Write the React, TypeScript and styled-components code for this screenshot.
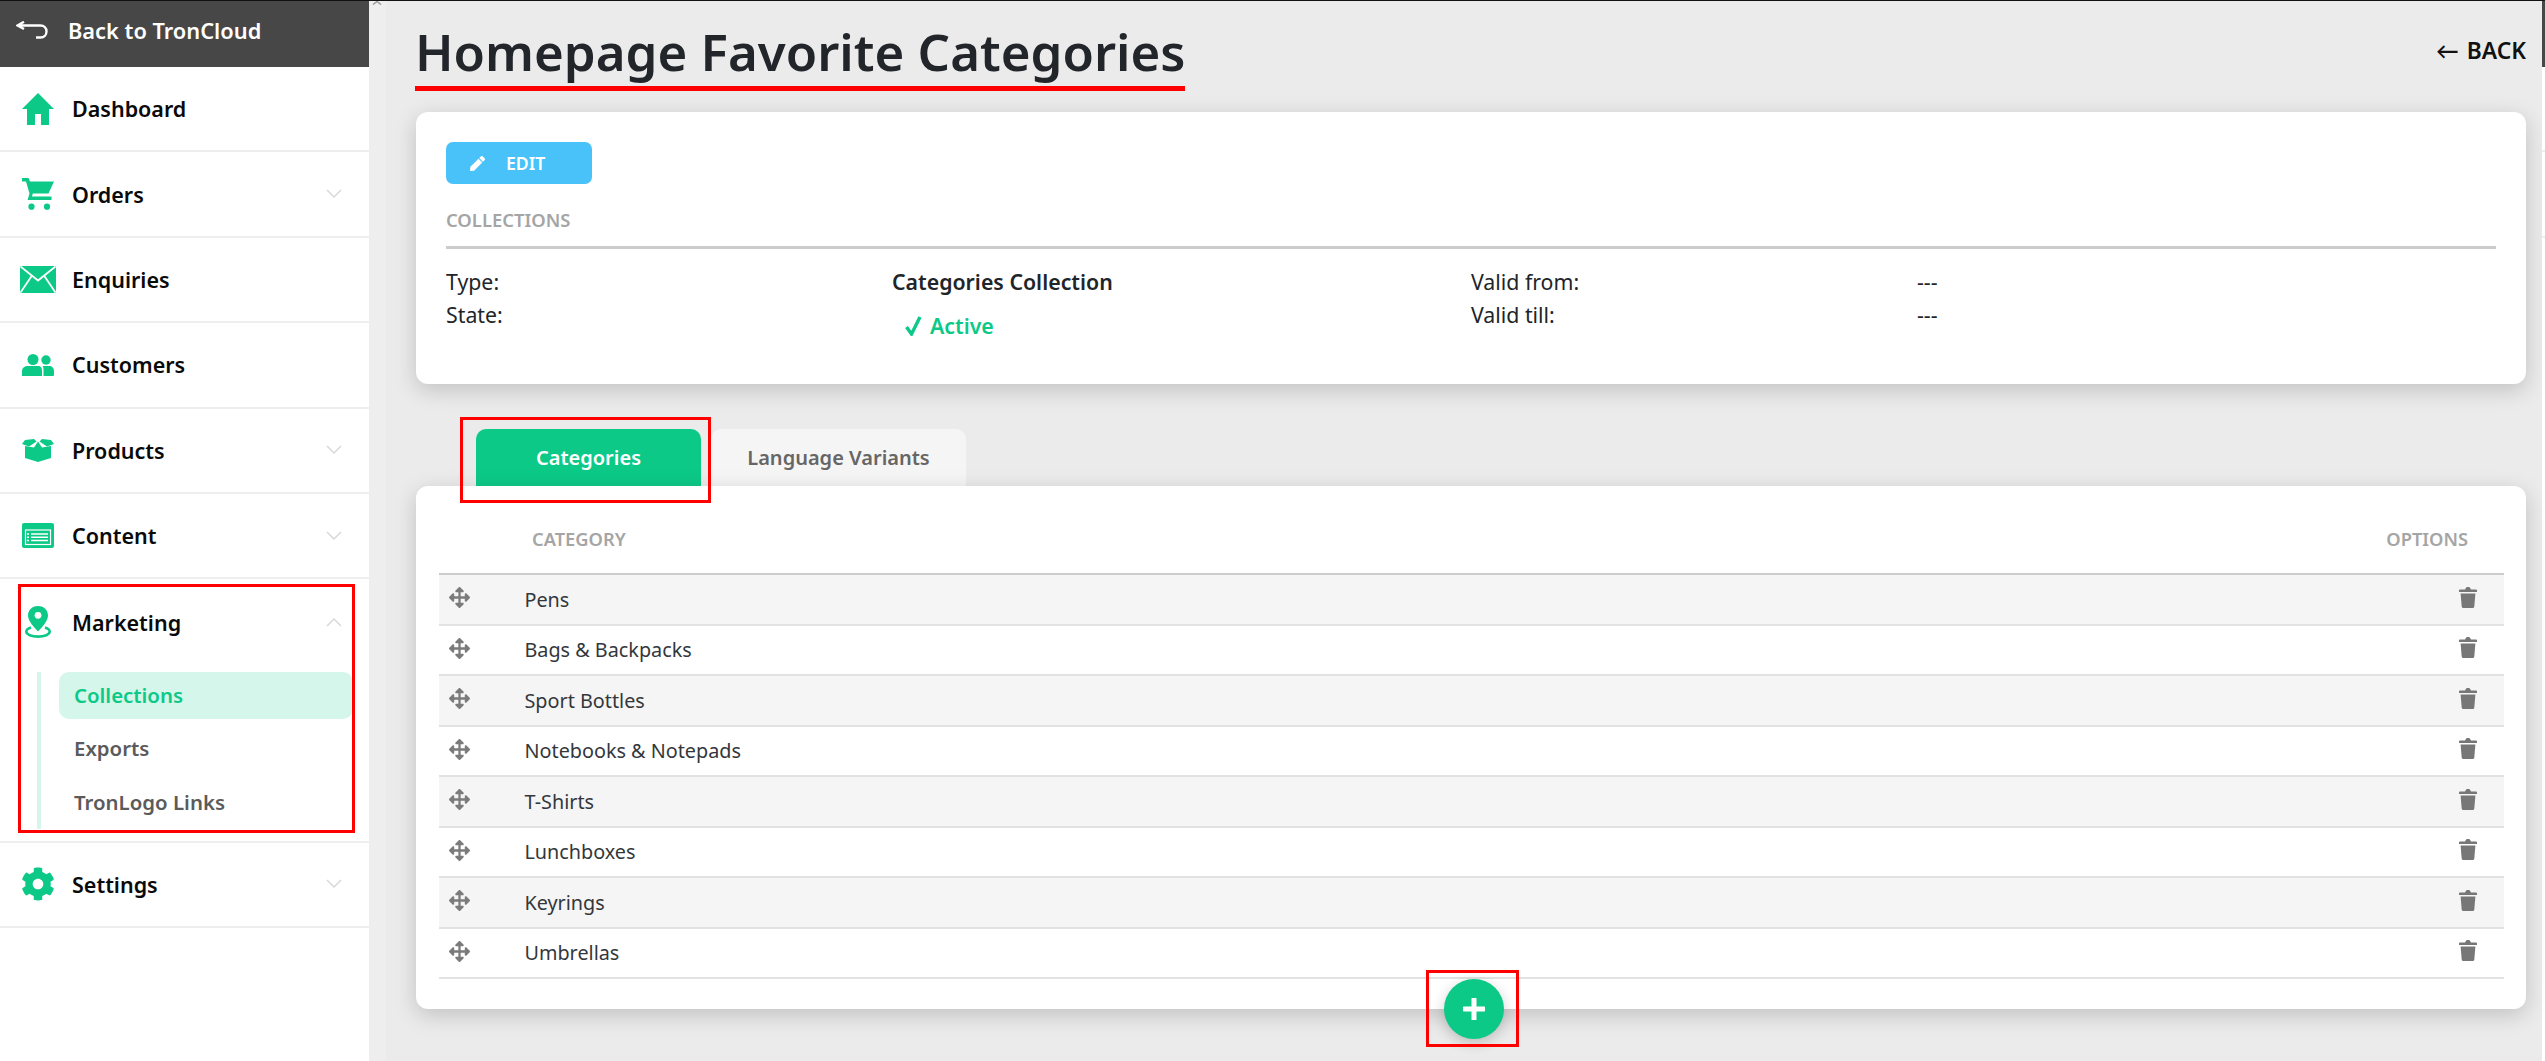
import React from "react";
import styled, { createGlobalStyle } from "styled-components";
import { FaArrowsAlt, FaCog, FaPen } from "react-icons/fa";

const GREEN = "#0cc987";
const FONT = `"Noto Sans", Lato, "Liberation Sans", sans-serif`;

const Global = createGlobalStyle`
  html, body { margin: 0; padding: 0; height: 100%; background: #ebebeb; }
  body { font-family: ${FONT}; color: #212529; }
  * { box-sizing: border-box; }
`;

const Shell = styled.div`
  position: relative;
  display: grid;
  grid-template-columns: 369px 17px 1fr 3px;
  height: 1061px;
  overflow: hidden;
  border-top: 1px solid #111;
  background: #ebebeb;
`;

const Sidebar = styled.aside`
  display: flex;
  flex-direction: column;
  background: #fff;
`;

const BackBar = styled.div`
  display: flex;
  align-items: center;
  height: 66px;
  padding: 0 0 8px 16px;
  gap: 20px;
  background: #474747;
  color: #fff;
  font-size: 21.8px;
  font-weight: 600;
`;

const NavRow = styled.div`
  display: flex;
  align-items: center;
  height: 85.4px;
  padding: 0 27px 0 20px;
  border-bottom: 2px solid #eee;
  font-size: 21.5px;
  font-weight: 600;
  color: #0a0a0a;
`;

const NavIcon = styled.span`
  display: flex;
  align-items: center;
  justify-content: center;
  width: 36px;
  margin-right: 16px;
  color: ${GREEN};
`;

const NavLabel = styled.span`
  flex: 1;
`;

const MarketingGroup = styled.div`
  border-bottom: 2px solid #eee;
`;

const MarketingHead = styled(NavRow)`
  height: 85.4px;
  border-bottom: none;
`;

const SubList = styled.div`
  display: flex;
  flex-direction: column;
  margin: 7px 16px 12px 37px;
  padding-left: 18px;
  border-left: 4px solid #d5f6ea;
`;

const SubItem = styled.div<{ $active?: boolean }>`
  display: flex;
  align-items: center;
  height: ${(p) => (p.$active ? "47px" : "54px")};
  margin-bottom: ${(p) => (p.$active ? "2px" : "0")};
  padding-left: 15px;
  border-radius: 10px;
  font-size: 20.4px;
  font-weight: 600;
  background: ${(p) => (p.$active ? "#d5f6ea" : "transparent")};
  color: ${(p) => (p.$active ? GREEN : "#5b5b5b")};
`;

const Gutter = styled.div`
  position: relative;
  background: #eeeeee;
`;

const GutterMark = styled.svg`
  position: absolute;
  left: 3px;
  top: 0;
  display: block;
`;

const EdgeStrip = styled.div`
  display: flex;
  flex-direction: column;
  background: #fff;
`;

const EdgeHead = styled.div`
  height: 66px;
  background: #474747;
`;

const EdgeCell = styled.div`
  height: 85.4px;
  border-bottom: 2px solid #eee;
`;

const Main = styled.main`
  display: flex;
  flex-direction: column;
  padding: 0 16px 0 30px;
  min-width: 0;
`;

const TitleRow = styled.header`
  display: flex;
  justify-content: space-between;
  align-items: flex-start;
  height: 111px;
`;

const Title = styled.h1`
  margin: 15px 0 0 -1px;
  height: 75px;
  border-bottom: 5px solid #f00;
  font-size: 51px;
  line-height: 71px;
  font-weight: 600;
  color: #22252a;
`;

const BackLink = styled.span`
  display: flex;
  align-items: center;
  gap: 8px;
  margin-top: 34px;
  font-size: 22.8px;
  font-weight: 600;
  color: #111;
`;

const Card = styled.section`
  background: #fff;
  border-radius: 12px;
  box-shadow: 0 6px 22px rgba(0, 0, 0, 0.18);
`;

const InfoCard = styled(Card)`
  height: 272px;
  padding: 30px 30px 0;
`;

const EditButton = styled.button`
  display: flex;
  align-items: center;
  gap: 21px;
  width: 146px;
  height: 42px;
  padding: 0 0 0 24px;
  border: none;
  border-radius: 7px;
  background: #48c2f9;
  color: #fff;
  font-family: ${FONT};
  font-size: 17.7px;
  font-weight: 600;
`;

const SectionLabel = styled.div`
  margin-top: 21px;
  height: 44px;
  line-height: 30px;
  border-bottom: 3px solid #ccc;
  font-size: 18.4px;
  font-weight: 600;
  color: #a5a5a5;
`;

const InfoGrid = styled.div`
  display: grid;
  grid-template-columns: 446px 579px 446px 1fr;
  grid-auto-rows: 33px;
  margin-top: 16px;
  font-size: 21.3px;
  line-height: 33px;
`;

const InfoValue = styled.span<{ $bold?: boolean }>`
  font-weight: ${(p) => (p.$bold ? 600 : 400)};
`;

const ActiveValue = styled.span`
  display: flex;
  align-items: center;
  gap: 8px;
  margin: 22px 0 0 13px;
  color: ${GREEN};
  font-weight: 600;
`;

const Tabs = styled.nav`
  display: flex;
  gap: 10px;
  height: 57px;
  margin-top: 45px;
  padding-left: 60px;
`;

const Tab = styled.div<{ $active?: boolean }>`
  display: flex;
  align-items: center;
  justify-content: center;
  width: ${(p) => (p.$active ? "225px" : "255px")};
  border-radius: 10px 10px 0 0;
  font-size: 20px;
  font-weight: 600;
  background: ${(p) => (p.$active ? GREEN : "#f5f5f5")};
  color: ${(p) => (p.$active ? "#fff" : "#666")};
`;

const TableCard = styled(Card)`
  position: relative;
  height: 523px;
  padding: 0 22px 0 23px;
`;

const TableHead = styled.div`
  display: flex;
  justify-content: space-between;
  align-items: center;
  height: 89px;
  padding: 18px 36px 0 93px;
  border-bottom: 2px solid #ccc;
  font-size: 18.3px;
  font-weight: 600;
  color: #a5a5a5;
`;

const Row = styled.div<{ $shaded: boolean }>`
  display: flex;
  align-items: center;
  height: 50.5px;
  padding: 0 27px 0 10px;
  border-bottom: 2px solid #e2e2e2;
  background: ${(p) => (p.$shaded ? "#f5f5f5" : "#fff")};
  font-size: 19.8px;
  color: #33373b;
`;

const DragHandle = styled.span`
  display: flex;
  width: 75.5px;
  margin-top: -3px;
  color: #7b7b7b;
`;

const RowName = styled.span`
  flex: 1;
`;

const TrashButton = styled.span`
  display: flex;
  margin-top: -4px;
  color: #777;
`;

const Fab = styled.button`
  position: absolute;
  left: 1028px;
  bottom: -30px;
  display: flex;
  align-items: center;
  justify-content: center;
  width: 60px;
  height: 60px;
  border: none;
  border-radius: 50%;
  background: ${GREEN};
  box-shadow: 0 4px 14px rgba(0, 0, 0, 0.2);
`;

const Annotation = styled.div<{ $l: number; $t: number; $w: number; $h: number }>`
  position: absolute;
  left: ${(p) => p.$l}px;
  top: ${(p) => p.$t}px;
  width: ${(p) => p.$w}px;
  height: ${(p) => p.$h}px;
  border: 3px solid #f00;
  pointer-events: none;
`;

const CheckMark = styled.svg`
  display: block;
  fill: none;
  stroke: ${GREEN};
  stroke-width: 3.4;
`;

const Svg = styled.svg`
  display: block;
  fill: currentColor;
`;

const HomeIcon = () => (
  <Svg width="32" height="32" viewBox="0 0 32 32">
    <path d="M16 0 32 16H27V32H19V21H13V32H5V16H0Z" />
  </Svg>
);
const CartIcon = () => (
  <Svg width="32" height="32" viewBox="0 0 32 32">
    <path d="M0 0H6.5L8 3.5H32L26.5 15.5H10.8L10 18.5H29.5V22H5.6L7.5 15.5 4 3.5H0Z" />
    <circle cx="9.5" cy="28.7" r="3.1" />
    <circle cx="25" cy="28.7" r="3.1" />
  </Svg>
);
const MailIcon = () => (
  <svg width="36" height="27" viewBox="0 0 36 27" style={{ display: "block" }}>
    <rect width="36" height="27" rx="1" fill={GREEN} />
    <path d="M.5.5 18 14.5 35.5.5M.5 26.5 12 9.5M35.5 26.5 24 9.5" fill="none" stroke="#fff" strokeWidth="1.8" />
  </svg>
);
const PeopleIcon = () => (
  <Svg width="32" height="22" viewBox="0 0 32 22">
    <circle cx="11" cy="5.5" r="5.5" />
    <circle cx="24" cy="6" r="4.7" />
    <path d="M0 22V17C0 13.5 3 12 6 12H16C19 12 20 14 20 17V22Z" />
    <path d="M21.5 22V15C21.5 13.5 21 12.5 20.5 12H27C30 12 32 14 32 17V20.5C32 21.5 31.5 22 30.5 22Z" />
  </Svg>
);
const BoxIcon = () => (
  <Svg width="32" height="23" viewBox="0 0 32 23">
    <path d="M3 1 12 0 14.5 2.5 7 7.5 0 5Z" />
    <path d="M29 1 20 0 17.5 2.5 25 7.5 32 5Z" />
    <path d="M16 2.5 20 8.5 29 7V19L16 23 3 19V7L12 8.5Z" />
  </Svg>
);
const ListIcon = () => (
  <svg width="32" height="25" viewBox="0 0 32 25" style={{ display: "block" }}>
    <rect width="32" height="25" rx="2" fill={GREEN} />
    <rect x="3.5" y="7" width="25" height="14.5" fill="none" stroke="#fff" strokeWidth="1.2" />
    <path d="M9 11H26M9 14.3H26M9 17.6H26M5 11H7M5 14.3H7M5 17.6H7" stroke="#fff" strokeWidth="1.5" />
  </svg>
);
const PinIcon = () => (
  <svg width="26" height="32" viewBox="0 0 26 32" style={{ display: "block" }}>
    <path d="M13 0C6.5 0 3 4.5 3 9.5 3 15 9 21 13 25.5 17 21 23 15 23 9.5 23 4.5 19.5 0 13 0Z" fill={GREEN} />
    <circle cx="13" cy="9.3" r="3.4" fill="#fff" />
    <path d="M6 21.5C3 22.5 1.3 23.8 1.3 25.6 1.3 28.6 6.5 30.6 13 30.6S24.7 28.6 24.7 25.6C24.7 23.8 23 22.5 20 21.5" fill="none" stroke={GREEN} strokeWidth="2.6" />
  </svg>
);
const BackArrowIcon = () => (
  <svg width="32" height="18" viewBox="0 0 32 18" style={{ display: "block" }}>
    <path d="M8 .8 1.5 4.5 8 8M2 4.5H24.5C28 4.5 30.5 6.8 30.5 10.5S28 16.5 24.5 16.5H20" fill="none" stroke="#fff" strokeWidth="2.4" />
  </svg>
);
const Chevron = ({ up }: { up?: boolean }) => (
  <svg width="16" height="10" viewBox="0 0 16 10" style={{ display: "block" }}>
    <path d={up ? "M1 9 8 2 15 9" : "M1 1 8 8 15 1"} fill="none" stroke="#d8d8d8" strokeWidth="1.5" />
  </svg>
);
const TrashIcon = () => (
  <Svg width="18" height="21" viewBox="0 0 18 21">
    <path d="M0 5V3.2C0 2.8.4 2.5 1 2.5H6L7 .8C7.2.3 7.6 0 8.2 0H9.8C10.4 0 10.8.3 11 .8L12 2.5H17C17.6 2.5 18 2.8 18 3.2V5Z" />
    <path d="M1.6 6.5H16.4L15.3 19.5C15.2 20.4 14.6 21 13.8 21H4.2C3.4 21 2.8 20.4 2.7 19.5Z" />
  </Svg>
);
const PlusIcon = () => (
  <svg width="22" height="22" viewBox="0 0 22 22" style={{ display: "block" }}>
    <path d="M11 1V21M1 11H21" stroke="#fff" strokeWidth="5" strokeLinecap="round" />
  </svg>
);

const navTop = [
  { label: "Dashboard", icon: <HomeIcon /> },
  { label: "Orders", icon: <CartIcon />, chevron: true },
  { label: "Enquiries", icon: <MailIcon /> },
  { label: "Customers", icon: <PeopleIcon /> },
  { label: "Products", icon: <BoxIcon />, chevron: true },
  { label: "Content", icon: <ListIcon />, chevron: true },
];

const categories = [
  "Pens",
  "Bags & Backpacks",
  "Sport Bottles",
  "Notebooks & Notepads",
  "T-Shirts",
  "Lunchboxes",
  "Keyrings",
  "Umbrellas",
];

export default function App() {
  return (
    <Shell>
      <Global />
      <Sidebar>
        <BackBar>
          <BackArrowIcon />
          Back to TronCloud
        </BackBar>
        {navTop.map((n) => (
          <NavRow key={n.label}>
            <NavIcon>{n.icon}</NavIcon>
            <NavLabel>{n.label}</NavLabel>
            {n.chevron && <Chevron />}
          </NavRow>
        ))}
        <MarketingGroup>
          <MarketingHead>
            <NavIcon>
              <PinIcon />
            </NavIcon>
            <NavLabel>Marketing</NavLabel>
            <Chevron up />
          </MarketingHead>
          <SubList>
            <SubItem $active>Collections</SubItem>
            <SubItem>Exports</SubItem>
            <SubItem>TronLogo Links</SubItem>
          </SubList>
        </MarketingGroup>
        <NavRow>
          <NavIcon>
            <FaCog size={34} />
          </NavIcon>
          <NavLabel>Settings</NavLabel>
          <Chevron />
        </NavRow>
      </Sidebar>
      <Gutter>
        <GutterMark width="10" height="4" viewBox="0 0 10 4">
          <path d="M1 3.5 5 .5 9 3.5" fill="none" stroke="#999" strokeWidth="1.5" />
        </GutterMark>
      </Gutter>
      <Main>
        <TitleRow>
          <Title>Homepage Favorite Categories</Title>
          <BackLink>
            <span>←</span>
            <span>BACK</span>
          </BackLink>
        </TitleRow>
        <InfoCard>
          <EditButton>
            <FaPen size={15} />
            EDIT
          </EditButton>
          <SectionLabel>COLLECTIONS</SectionLabel>
          <InfoGrid>
            <span>Type:</span>
            <InfoValue $bold>Categories Collection</InfoValue>
            <span>Valid from:</span>
            <InfoValue>---</InfoValue>
            <span>State:</span>
            <ActiveValue>
              <CheckMark width="17" height="20" viewBox="0 0 17 20">
                <path d="M1.5 11 6.5 18 15 1" />
              </CheckMark>
              <span>Active</span>
            </ActiveValue>
            <span>Valid till:</span>
            <InfoValue>---</InfoValue>
          </InfoGrid>
        </InfoCard>
        <Tabs>
          <Tab $active>Categories</Tab>
          <Tab>Language Variants</Tab>
        </Tabs>
        <TableCard>
          <TableHead>
            <span>CATEGORY</span>
            <span>OPTIONS</span>
          </TableHead>
          {categories.map((c, i) => (
            <Row key={c} $shaded={i % 2 === 0}>
              <DragHandle>
                <FaArrowsAlt size={21} />
              </DragHandle>
              <RowName>{c}</RowName>
              <TrashButton>
                <TrashIcon />
              </TrashButton>
            </Row>
          ))}
          <Fab aria-label="Add">
            <PlusIcon />
          </Fab>
        </TableCard>
      </Main>
      <EdgeStrip>
        <EdgeHead />
        <EdgeCell />
        <EdgeCell />
      </EdgeStrip>
      <Annotation $l={18} $t={583} $w={337} $h={249} />
      <Annotation $l={460} $t={416} $w={251} $h={86} />
      <Annotation $l={1426} $t={969} $w={93} $h={77} />
    </Shell>
  );
}
